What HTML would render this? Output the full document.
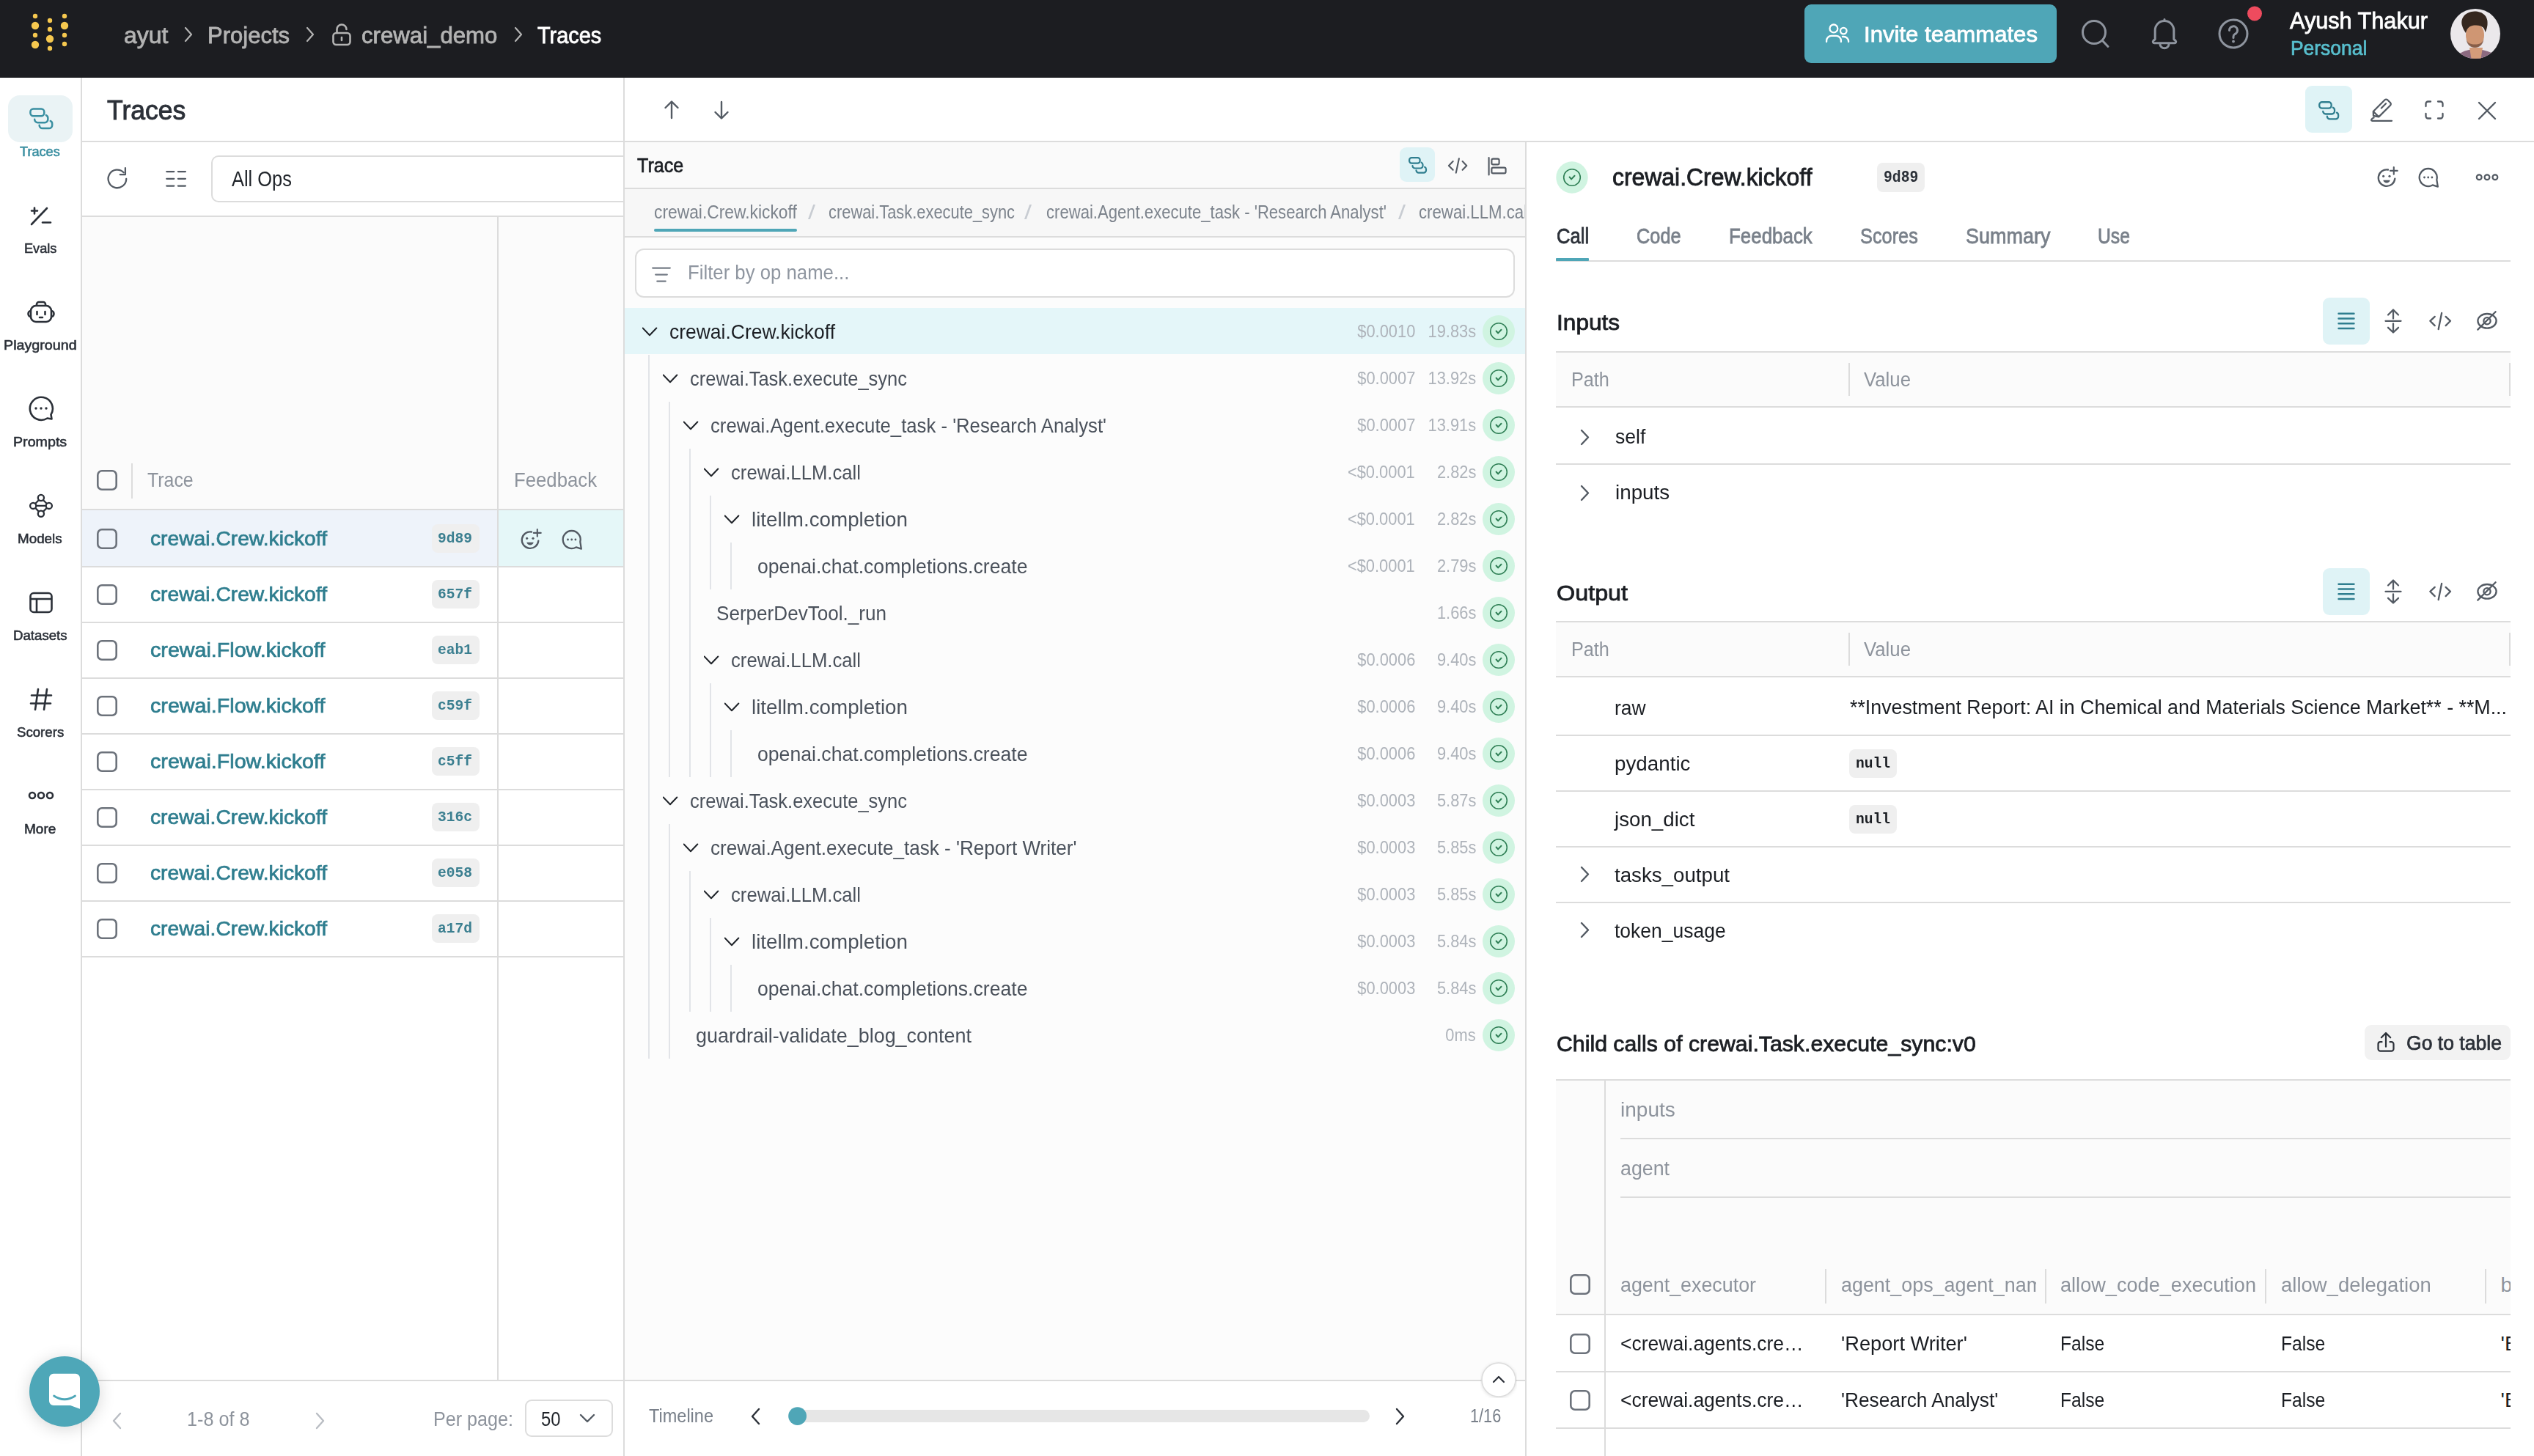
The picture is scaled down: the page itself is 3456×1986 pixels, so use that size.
<!DOCTYPE html>
<html><head><meta charset="utf-8"><title>Weave Traces</title>
<style>
html,body{margin:0;padding:0;width:3456px;height:1986px;overflow:hidden;background:#fff;}
.a{position:absolute;}
.t{white-space:pre;line-height:1;transform-origin:left;}
body{font-family:"Liberation Sans", sans-serif;}
</style></head><body>
<div class="a" style="left:0px;top:0px;width:3456px;height:106px;background:#1c1d21;"></div>
<svg class="a" style="left:0px;top:0px;" width="120" height="106" viewBox="0 0 120 106" fill="none"><circle cx="48" cy="22" r="3.2" fill="#f6c84f"/><circle cx="48" cy="35" r="5.2" fill="#f6c84f"/><circle cx="48" cy="48" r="3.2" fill="#f6c84f"/><circle cx="48" cy="61" r="5.2" fill="#f6c84f"/><circle cx="68" cy="28" r="3.2" fill="#f6c84f"/><circle cx="68" cy="40" r="3.2" fill="#f6c84f"/><circle cx="68" cy="53" r="5.2" fill="#f6c84f"/><circle cx="68" cy="66" r="3.2" fill="#f6c84f"/><circle cx="88" cy="22" r="3.2" fill="#f6c84f"/><circle cx="88" cy="35" r="5.2" fill="#f6c84f"/><circle cx="88" cy="48" r="3.2" fill="#f6c84f"/><circle cx="88" cy="60" r="3.2" fill="#f6c84f"/></svg>
<span class="a t" style="left:168.7px;top:32.8px;font-size:30.52px;font-weight:400;color:#b3b3b3;font-family:'Liberation Sans', sans-serif;transform:scaleX(1.0453);-webkit-text-stroke:0.79px #b3b3b3;">ayut</span>
<svg class="a" style="left:250px;top:35px;" width="14" height="24" viewBox="0 0 14 24" fill="none"><path d="M3 3 L11 12 L3 21" stroke="#b3b3b3" stroke-width="2.2" stroke-linecap="round" stroke-linejoin="round"/></svg>
<span class="a t" style="left:283.0px;top:32.8px;font-size:30.52px;font-weight:400;color:#b3b3b3;font-family:'Liberation Sans', sans-serif;transform:scaleX(1.0160);-webkit-text-stroke:0.79px #b3b3b3;">Projects</span>
<svg class="a" style="left:416px;top:35px;" width="14" height="24" viewBox="0 0 14 24" fill="none"><path d="M3 3 L11 12 L3 21" stroke="#b3b3b3" stroke-width="2.2" stroke-linecap="round" stroke-linejoin="round"/></svg>
<svg class="a" style="left:450px;top:30px;" width="32" height="34" viewBox="0 0 32 34" fill="none"><rect x="4.5" y="15" width="23" height="16" rx="4" stroke="#b3b3b3" stroke-width="2.6"/><path d="M9.5 15 V10 a6.5 6.5 0 0 1 13 0" stroke="#b3b3b3" stroke-width="2.6" stroke-linecap="round"/><path d="M16 21 v4" stroke="#b3b3b3" stroke-width="2.6" stroke-linecap="round"/></svg>
<span class="a t" style="left:492.6px;top:32.8px;font-size:30.52px;font-weight:400;color:#b3b3b3;font-family:'Liberation Sans', sans-serif;transform:scaleX(1.0215);-webkit-text-stroke:0.79px #b3b3b3;">crewai_demo</span>
<svg class="a" style="left:700px;top:35px;" width="14" height="24" viewBox="0 0 14 24" fill="none"><path d="M3 3 L11 12 L3 21" stroke="#b3b3b3" stroke-width="2.2" stroke-linecap="round" stroke-linejoin="round"/></svg>
<span class="a t" style="left:732.7px;top:32.8px;font-size:30.52px;font-weight:400;color:#ffffff;font-family:'Liberation Sans', sans-serif;transform:scaleX(0.9475);-webkit-text-stroke:0.79px #ffffff;">Traces</span>
<div class="a" style="left:2461px;top:6px;width:344px;height:80px;background:#4fa6b7;border-radius:9px;"></div>
<svg class="a" style="left:2486px;top:30px;" width="40" height="32" viewBox="0 0 40 32" fill="none"><circle cx="14.9" cy="8.9" r="5.4" stroke="#fff" stroke-width="2.3"/><path d="M5.1 27.1 V25.5 a6.6 6.6 0 0 1 6.6 -6.6 H18.3 a6.6 6.6 0 0 1 6.6 6.6 V27.1" stroke="#fff" stroke-width="2.3" stroke-linecap="round"/><circle cx="28.3" cy="12.1" r="4.3" stroke="#fff" stroke-width="2.3"/><path d="M26.9 20 H28.5 a6.6 6.6 0 0 1 6.6 6.6 V27.1" stroke="#fff" stroke-width="2.3" stroke-linecap="round"/></svg>
<span class="a t" style="left:2542.0px;top:32.4px;font-size:30.23px;font-weight:400;color:#ffffff;font-family:'Liberation Sans', sans-serif;transform:scaleX(1.0300);-webkit-text-stroke:0.79px #ffffff;">Invite teammates</span>
<svg class="a" style="left:2830px;top:18px;" width="52" height="52" viewBox="0 0 52 52" fill="none"><circle cx="26" cy="26" r="15.5" stroke="#8e949e" stroke-width="3"/><path d="M37.5 37.5 L45 45.5" stroke="#8e949e" stroke-width="3" stroke-linecap="round"/></svg>
<svg class="a" style="left:2930px;top:22px;" width="44" height="48" viewBox="0 0 44 48" fill="none"><path d="M22 4.5 V6.3 M9.2 31.5 V19.3 a12.8 12.8 0 0 1 25.6 0 V31.5 l2.3 2 a1.9 1.9 0 0 1 -1.3 3.3 H8.2 a1.9 1.9 0 0 1 -1.3 -3.3 z M16 38.3 a6 5.5 0 0 0 12 0" stroke="#8e949e" stroke-width="3" stroke-linejoin="round" stroke-linecap="round"/></svg>
<svg class="a" style="left:3020px;top:20px;" width="52" height="52" viewBox="0 0 52 52" fill="none"><circle cx="26" cy="26" r="19" stroke="#8e949e" stroke-width="3"/><path d="M20.5 21.5 a5.5 5.5 0 1 1 7.5 5 c-1.5 0.8 -2 1.8 -2 3.5 v1.5" stroke="#8e949e" stroke-width="3" stroke-linecap="round"/><circle cx="26" cy="36.5" r="1.9" fill="#8e949e"/></svg>
<svg class="a" style="left:3064px;top:8px;" width="22" height="22" viewBox="0 0 22 22" fill="none"><circle cx="11" cy="10.5" r="10" fill="#ee4b5e"/></svg>
<span class="a t" style="left:3123.0px;top:11.7px;font-size:31.98px;font-weight:400;color:#ffffff;font-family:'Liberation Sans', sans-serif;transform:scaleX(0.9588);-webkit-text-stroke:0.83px #ffffff;">Ayush Thakur</span>
<span class="a t" style="left:3123.7px;top:53.2px;font-size:26.89px;font-weight:400;color:#58bfce;font-family:'Liberation Sans', sans-serif;transform:scaleX(0.9832);-webkit-text-stroke:0.7px #58bfce;">Personal</span>
<svg class="a" style="left:3341px;top:11px;" width="70" height="70" viewBox="0 0 70 70" fill="none"><defs><clipPath id="av"><circle cx="35" cy="35" r="34"/></clipPath></defs>
<g clip-path="url(#av)"><rect width="70" height="70" fill="#ebe8eb"/>
<path d="M6 72 L12 63 C20 58 27 56 35 56 C43 56 50 58 57 61 L66 67 L68 72 Z" fill="#8c6a80"/>
<path d="M27 54 L45 54 L42 72 L30 72 Z" fill="#d49c7a"/>
<ellipse cx="34.5" cy="37" rx="12.5" ry="16.5" fill="#cf9673"/>
<path d="M22.5 42 C23.5 50 28 54 34.5 54 C41 54 45.5 50 46.5 42 C45 47 42 49.5 34.5 49.5 C27 49.5 24 47 22.5 42 Z" fill="#6a4636" opacity="0.7"/>
<path d="M17 24 C14 13 22 5 34 4.5 C45 4.5 53 11 51.5 23 C51 27 50 30 48.5 33 C47.5 27 45 24 36 23.5 C28 23.5 24 26 22 34 C20 31 18 28 17 24 Z" fill="#35271f"/>
</g></svg>
<div class="a" style="left:110px;top:106px;width:2px;height:1880px;background:#dcdcdc;"></div>
<div class="a" style="left:11px;top:130px;width:88px;height:64px;background:#eaf3f5;border-radius:16px;"></div>
<svg class="a" style="left:38px;top:145px;" width="43" height="39" viewBox="0 0 43 39" fill="none"><g transform="translate(2 2) scale(1.3)"><rect x="1.1" y="1.1" width="14.5" height="7.5" rx="3.1" stroke="#3a8fa1" stroke-width="1.923076923076923"/><path d="M5.5 12.2 a3.3 3.3 0 0 0 3.3 3.3 H16.2 a3.3 3.3 0 0 0 3.3 -3.3 V10.8 a3.3 3.3 0 0 0 -1.9 -3.1" stroke="#3a8fa1" stroke-width="1.923076923076923" stroke-linecap="round"/><path d="M10.5 18.3 a3.3 3.3 0 0 0 3.3 3.3 H20.7 a3.3 3.3 0 0 0 3.3 -3.3 V16.9 a3.3 3.3 0 0 0 -1.9 -3.1" stroke="#3a8fa1" stroke-width="1.923076923076923" stroke-linecap="round"/></g></svg>
<span class="a t" style="left:27.4px;top:197.7px;font-size:18.6px;font-weight:400;color:#3a8fa1;font-family:'Liberation Sans', sans-serif;transform:scaleX(0.9761);-webkit-text-stroke:0.55px #3a8fa1;">Traces</span>
<svg class="a" style="left:38px;top:280px;" width="36" height="30" viewBox="0 0 36 30" fill="none"><path d="M5 7.5 h8 M9 3.5 v8 M26 4 L5 26 M20 23.5 h11" stroke="#2b3038" stroke-width="2.6" stroke-linecap="round"/></svg>
<span class="a t" style="left:32.6px;top:330.0px;font-size:18.6px;font-weight:400;color:#2b3038;font-family:'Liberation Sans', sans-serif;transform:scaleX(0.9765);-webkit-text-stroke:0.55px #2b3038;">Evals</span>
<svg class="a" style="left:36px;top:408px;" width="40" height="36" viewBox="0 0 40 36" fill="none"><rect x="6" y="9" width="28" height="22" rx="7" stroke="#2b3038" stroke-width="2.6"/><path d="M14 9 v-2 a3 3 0 0 1 3-3 h6 a3 3 0 0 1 3 3 v2" stroke="#2b3038" stroke-width="2.6"/><path d="M6 16 a3.5 4 0 0 0 0 8 M34 16 a3.5 4 0 0 1 0 8" stroke="#2b3038" stroke-width="2.6"/><path d="M14.5 17 v4 M25.5 17 v4 M18 25 h4" stroke="#2b3038" stroke-width="2.6" stroke-linecap="round"/></svg>
<span class="a t" style="left:4.7px;top:461.9px;font-size:18.6px;font-weight:400;color:#2b3038;font-family:'Liberation Sans', sans-serif;transform:scaleX(1.0598);-webkit-text-stroke:0.55px #2b3038;">Playground</span>
<svg class="a" style="left:37px;top:538px;" width="38" height="38" viewBox="0 0 38 38" fill="none"><path d="M33.5 33.5 l-1-6 a15.5 15.5 0 1 0 -5 5 z" stroke="#2b3038" stroke-width="2.6" stroke-linejoin="round"/><circle cx="12" cy="19" r="1.7" fill="#2b3038"/><circle cx="19" cy="19" r="1.7" fill="#2b3038"/><circle cx="26" cy="19" r="1.7" fill="#2b3038"/></svg>
<span class="a t" style="left:17.8px;top:593.9px;font-size:18.6px;font-weight:400;color:#2b3038;font-family:'Liberation Sans', sans-serif;transform:scaleX(1.0573);-webkit-text-stroke:0.55px #2b3038;">Prompts</span>
<svg class="a" style="left:37px;top:670px;" width="38" height="38" viewBox="0 0 38 38" fill="none"><circle cx="18.9" cy="9" r="4.1" stroke="#2b3038" stroke-width="2.3"/><circle cx="18.9" cy="30.8" r="4.1" stroke="#2b3038" stroke-width="2.3"/><circle cx="8.2" cy="19.9" r="4.1" stroke="#2b3038" stroke-width="2.3"/><circle cx="29.8" cy="19.9" r="4.1" stroke="#2b3038" stroke-width="2.3"/><path d="M16 12 L11.1 17 M21.8 12 L26.9 17 M11.1 22.8 L16 27.9 M26.9 22.8 L21.8 27.9 M12.3 19.9 H25.7" stroke="#2b3038" stroke-width="2.3"/></svg>
<span class="a t" style="left:24.3px;top:725.9px;font-size:18.6px;font-weight:400;color:#2b3038;font-family:'Liberation Sans', sans-serif;transform:scaleX(1.0125);-webkit-text-stroke:0.55px #2b3038;">Models</span>
<svg class="a" style="left:38px;top:804px;" width="36" height="36" viewBox="0 0 36 36" fill="none"><rect x="3.5" y="5" width="29" height="26" rx="4.5" stroke="#2b3038" stroke-width="2.6"/><path d="M3.5 13 h29 M12 13 v18" stroke="#2b3038" stroke-width="2.6"/></svg>
<span class="a t" style="left:17.9px;top:857.9px;font-size:18.6px;font-weight:400;color:#2b3038;font-family:'Liberation Sans', sans-serif;transform:scaleX(1.0029);-webkit-text-stroke:0.55px #2b3038;">Datasets</span>
<svg class="a" style="left:38px;top:936px;" width="36" height="36" viewBox="0 0 36 36" fill="none"><path d="M14 4 L10 32 M26 4 L22 32 M5 12.5 h27 M4 23.5 h27" stroke="#2b3038" stroke-width="2.6" stroke-linecap="round"/></svg>
<span class="a t" style="left:22.6px;top:989.9px;font-size:18.6px;font-weight:400;color:#2b3038;font-family:'Liberation Sans', sans-serif;transform:scaleX(1.0021);-webkit-text-stroke:0.55px #2b3038;">Scorers</span>
<svg class="a" style="left:36px;top:1076px;" width="40" height="18" viewBox="0 0 40 18" fill="none"><circle cx="8" cy="9" r="4" stroke="#2b3038" stroke-width="2.6"/><circle cx="20" cy="9" r="4" stroke="#2b3038" stroke-width="2.6"/><circle cx="32" cy="9" r="4" stroke="#2b3038" stroke-width="2.6"/></svg>
<span class="a t" style="left:33.2px;top:1121.9px;font-size:18.6px;font-weight:400;color:#2b3038;font-family:'Liberation Sans', sans-serif;transform:scaleX(1.0242);-webkit-text-stroke:0.55px #2b3038;">More</span>
<div class="a" style="left:850px;top:106px;width:2px;height:1880px;background:#dcdcdc;"></div>
<span class="a t" style="left:145.6px;top:132.0px;font-size:37.06px;font-weight:400;color:#2b3038;font-family:'Liberation Sans', sans-serif;transform:scaleX(0.9601);-webkit-text-stroke:0.96px #2b3038;">Traces</span>
<div class="a" style="left:112px;top:192px;width:739px;height:2px;background:#dcdcdc;"></div>
<svg class="a" style="left:144px;top:228px;" width="32" height="32" viewBox="0 0 32 32" fill="none"><path d="M28.2 15.9 A12.3 12.3 0 1 1 24.6 7.2" stroke="#535a63" stroke-width="2.3" stroke-linecap="round"/><path d="M26.9 1.2 V10.2 H19.8" stroke="#535a63" stroke-width="2.3" stroke-linecap="round" stroke-linejoin="round"/></svg>
<svg class="a" style="left:224px;top:228px;" width="32" height="32" viewBox="0 0 32 32" fill="none"><path d="M3.3 6.1 H13.3 M3.3 15.8 H13.3 M3.3 25.6 H13.3 M18.9 6.1 H28.9 M18.9 15.8 H28.9 M18.9 25.6 H28.9" stroke="#535a63" stroke-width="2.3" stroke-linecap="round"/></svg>
<div class="a" style="left:288px;top:212px;width:562px;height:64px;overflow:hidden">
<div class="a" style="left:0px;top:0px;width:600px;height:64px;background:#fff;box-shadow:inset 0 0 0 2px #dcdcdc;border-radius:10px;"></div>
</div>
<span class="a t" style="left:316.0px;top:229.4px;font-size:29.8px;font-weight:400;color:#1f2329;font-family:'Liberation Sans', sans-serif;transform:scaleX(0.8537);">All Ops</span>
<div class="a" style="left:112px;top:294px;width:739px;height:2px;background:#dcdcdc;"></div>
<div class="a" style="left:112px;top:296px;width:738px;height:398px;background:#fbfbfb;"></div>
<div class="a" style="left:678px;top:296px;width:2px;height:1586px;background:#dcdcdc;"></div>
<div class="a" style="left:112px;top:694px;width:739px;height:2px;background:#dcdcdc;"></div>
<div class="a" style="left:132px;top:641px;width:28px;height:28px;background:transparent;box-shadow:inset 0 0 0 2.6px #6c727b;border-radius:7px;"></div>
<div class="a" style="left:179px;top:632px;width:2px;height:48px;background:#dcdcdc;"></div>
<span class="a t" style="left:200.6px;top:641.2px;font-size:28.05px;font-weight:400;color:#8d939c;font-family:'Liberation Sans', sans-serif;transform:scaleX(0.8874);">Trace</span>
<span class="a t" style="left:701.0px;top:641.2px;font-size:28.05px;font-weight:400;color:#8d939c;font-family:'Liberation Sans', sans-serif;transform:scaleX(0.9174);">Feedback</span>
<div class="a" style="left:112px;top:696px;width:566px;height:76px;background:#eef3fa;"></div>
<div class="a" style="left:680px;top:696px;width:170px;height:76px;background:#e5f7f8;"></div>
<div class="a" style="left:112px;top:772px;width:738px;height:2px;background:#dcdcdc;"></div>
<div class="a" style="left:132px;top:721px;width:28px;height:28px;background:transparent;box-shadow:inset 0 0 0 2.6px #6c727b;border-radius:7px;"></div>
<span class="a t" style="left:205.0px;top:720.6px;font-size:27.62px;font-weight:400;color:#2f7e8f;font-family:'Liberation Sans', sans-serif;transform:scaleX(1.0221);-webkit-text-stroke:0.72px #2f7e8f;">crewai.Crew.kickoff</span>
<div class="a" style="left:589px;top:715px;width:65px;height:39px;background:#efefef;border-radius:8px;"></div>
<span class="a t" style="left:597.3px;top:725.2px;font-size:20.64px;font-weight:700;color:#3b7f90;font-family:'Liberation Mono', monospace;transform:scaleX(0.9492);">9d89</span>
<div class="a" style="left:112px;top:848px;width:738px;height:2px;background:#dcdcdc;"></div>
<div class="a" style="left:132px;top:797px;width:28px;height:28px;background:transparent;box-shadow:inset 0 0 0 2.6px #6c727b;border-radius:7px;"></div>
<span class="a t" style="left:205.0px;top:796.6px;font-size:27.62px;font-weight:400;color:#2f7e8f;font-family:'Liberation Sans', sans-serif;transform:scaleX(1.0221);-webkit-text-stroke:0.72px #2f7e8f;">crewai.Crew.kickoff</span>
<div class="a" style="left:589px;top:791px;width:65px;height:39px;background:#efefef;border-radius:8px;"></div>
<span class="a t" style="left:597.3px;top:801.2px;font-size:20.64px;font-weight:700;color:#3b7f90;font-family:'Liberation Mono', monospace;transform:scaleX(0.9492);">657f</span>
<div class="a" style="left:112px;top:924px;width:738px;height:2px;background:#dcdcdc;"></div>
<div class="a" style="left:132px;top:873px;width:28px;height:28px;background:transparent;box-shadow:inset 0 0 0 2.6px #6c727b;border-radius:7px;"></div>
<span class="a t" style="left:205.0px;top:872.6px;font-size:27.62px;font-weight:400;color:#2f7e8f;font-family:'Liberation Sans', sans-serif;transform:scaleX(1.0381);-webkit-text-stroke:0.72px #2f7e8f;">crewai.Flow.kickoff</span>
<div class="a" style="left:589px;top:867px;width:65px;height:39px;background:#efefef;border-radius:8px;"></div>
<span class="a t" style="left:597.3px;top:877.2px;font-size:20.64px;font-weight:700;color:#3b7f90;font-family:'Liberation Mono', monospace;transform:scaleX(0.9492);">eab1</span>
<div class="a" style="left:112px;top:1000px;width:738px;height:2px;background:#dcdcdc;"></div>
<div class="a" style="left:132px;top:949px;width:28px;height:28px;background:transparent;box-shadow:inset 0 0 0 2.6px #6c727b;border-radius:7px;"></div>
<span class="a t" style="left:205.0px;top:948.6px;font-size:27.62px;font-weight:400;color:#2f7e8f;font-family:'Liberation Sans', sans-serif;transform:scaleX(1.0381);-webkit-text-stroke:0.72px #2f7e8f;">crewai.Flow.kickoff</span>
<div class="a" style="left:589px;top:943px;width:65px;height:39px;background:#efefef;border-radius:8px;"></div>
<span class="a t" style="left:597.3px;top:953.2px;font-size:20.64px;font-weight:700;color:#3b7f90;font-family:'Liberation Mono', monospace;transform:scaleX(0.9492);">c59f</span>
<div class="a" style="left:112px;top:1076px;width:738px;height:2px;background:#dcdcdc;"></div>
<div class="a" style="left:132px;top:1025px;width:28px;height:28px;background:transparent;box-shadow:inset 0 0 0 2.6px #6c727b;border-radius:7px;"></div>
<span class="a t" style="left:205.0px;top:1024.6px;font-size:27.62px;font-weight:400;color:#2f7e8f;font-family:'Liberation Sans', sans-serif;transform:scaleX(1.0381);-webkit-text-stroke:0.72px #2f7e8f;">crewai.Flow.kickoff</span>
<div class="a" style="left:589px;top:1019px;width:65px;height:39px;background:#efefef;border-radius:8px;"></div>
<span class="a t" style="left:597.3px;top:1029.2px;font-size:20.64px;font-weight:700;color:#3b7f90;font-family:'Liberation Mono', monospace;transform:scaleX(0.9492);">c5ff</span>
<div class="a" style="left:112px;top:1152px;width:738px;height:2px;background:#dcdcdc;"></div>
<div class="a" style="left:132px;top:1101px;width:28px;height:28px;background:transparent;box-shadow:inset 0 0 0 2.6px #6c727b;border-radius:7px;"></div>
<span class="a t" style="left:205.0px;top:1100.6px;font-size:27.62px;font-weight:400;color:#2f7e8f;font-family:'Liberation Sans', sans-serif;transform:scaleX(1.0221);-webkit-text-stroke:0.72px #2f7e8f;">crewai.Crew.kickoff</span>
<div class="a" style="left:589px;top:1095px;width:65px;height:39px;background:#efefef;border-radius:8px;"></div>
<span class="a t" style="left:597.3px;top:1105.2px;font-size:20.64px;font-weight:700;color:#3b7f90;font-family:'Liberation Mono', monospace;transform:scaleX(0.9492);">316c</span>
<div class="a" style="left:112px;top:1228px;width:738px;height:2px;background:#dcdcdc;"></div>
<div class="a" style="left:132px;top:1177px;width:28px;height:28px;background:transparent;box-shadow:inset 0 0 0 2.6px #6c727b;border-radius:7px;"></div>
<span class="a t" style="left:205.0px;top:1176.6px;font-size:27.62px;font-weight:400;color:#2f7e8f;font-family:'Liberation Sans', sans-serif;transform:scaleX(1.0221);-webkit-text-stroke:0.72px #2f7e8f;">crewai.Crew.kickoff</span>
<div class="a" style="left:589px;top:1171px;width:65px;height:39px;background:#efefef;border-radius:8px;"></div>
<span class="a t" style="left:597.3px;top:1181.2px;font-size:20.64px;font-weight:700;color:#3b7f90;font-family:'Liberation Mono', monospace;transform:scaleX(0.9492);">e058</span>
<div class="a" style="left:112px;top:1304px;width:738px;height:2px;background:#dcdcdc;"></div>
<div class="a" style="left:132px;top:1253px;width:28px;height:28px;background:transparent;box-shadow:inset 0 0 0 2.6px #6c727b;border-radius:7px;"></div>
<span class="a t" style="left:205.0px;top:1252.6px;font-size:27.62px;font-weight:400;color:#2f7e8f;font-family:'Liberation Sans', sans-serif;transform:scaleX(1.0221);-webkit-text-stroke:0.72px #2f7e8f;">crewai.Crew.kickoff</span>
<div class="a" style="left:589px;top:1247px;width:65px;height:39px;background:#efefef;border-radius:8px;"></div>
<span class="a t" style="left:597.3px;top:1257.2px;font-size:20.64px;font-weight:700;color:#3b7f90;font-family:'Liberation Mono', monospace;transform:scaleX(0.9492);">a17d</span>
<svg class="a" style="left:708px;top:720px;" width="34" height="32" viewBox="0 0 34 32" fill="none"><path d="M26.3 17.6 A11.3 11.3 0 1 1 17 5.5" stroke="#535a63" stroke-width="2.3" stroke-linecap="round"/><circle cx="10.6" cy="14.3" r="1.6" fill="#535a63"/><circle cx="19" cy="14.3" r="1.6" fill="#535a63"/><path d="M10.3 19.8 H19.7 C19 22.3 17.2 23.6 15 23.6 C12.8 23.6 11 22.3 10.3 19.8 Z" fill="#535a63"/><path d="M24.8 2 V11.8 M19.9 6.9 H29.7" stroke="#535a63" stroke-width="2.1" stroke-linecap="round"/></svg>
<svg class="a" style="left:765px;top:720px;" width="32" height="32" viewBox="0 0 32 32" fill="none"><path d="M20.7 26.4 A12 12 0 1 1 26.3 19.1 L27.8 28.6 Z" stroke="#535a63" stroke-width="2.3" stroke-linejoin="round"/><circle cx="9.5" cy="16" r="1.4" fill="#535a63"/><circle cx="14.7" cy="16" r="1.4" fill="#535a63"/><circle cx="19.9" cy="16" r="1.4" fill="#535a63"/></svg>
<div class="a" style="left:112px;top:1882px;width:738px;height:2px;background:#dcdcdc;"></div>
<svg class="a" style="left:150px;top:1924px;" width="20" height="28" viewBox="0 0 20 28" fill="none"><path d="M14 4 L5 14 L14 24" stroke="#b9bdc3" stroke-width="2.4" stroke-linecap="round" stroke-linejoin="round"/></svg>
<span class="a t" style="left:254.5px;top:1922.2px;font-size:27.62px;font-weight:400;color:#8d939c;font-family:'Liberation Sans', sans-serif;transform:scaleX(0.9131);">1-8 of 8</span>
<svg class="a" style="left:426px;top:1924px;" width="20" height="28" viewBox="0 0 20 28" fill="none"><path d="M6 4 L15 14 L6 24" stroke="#b9bdc3" stroke-width="2.4" stroke-linecap="round" stroke-linejoin="round"/></svg>
<span class="a t" style="left:591.0px;top:1922.2px;font-size:27.62px;font-weight:400;color:#8d939c;font-family:'Liberation Sans', sans-serif;transform:scaleX(0.9103);">Per page:</span>
<div class="a" style="left:716px;top:1909px;width:120px;height:51px;background:#fff;box-shadow:inset 0 0 0 2px #dcdcdc;border-radius:9px;"></div>
<span class="a t" style="left:737.5px;top:1922.2px;font-size:27.62px;font-weight:400;color:#1f2329;font-family:'Liberation Sans', sans-serif;transform:scaleX(0.8627);">50</span>
<svg class="a" style="left:788px;top:1924px;" width="28" height="20" viewBox="0 0 28 20" fill="none"><path d="M4 6 L13 15 L22 6" stroke="#535a63" stroke-width="2.4" stroke-linecap="round" stroke-linejoin="round"/></svg>
<svg class="a" style="left:900px;top:134px;" width="32" height="32" viewBox="0 0 32 32" fill="none"><path d="M16 27 V5.5 M7.5 13 L16 4.5 L24.5 13" stroke="#535a63" stroke-width="2.4" stroke-linecap="round" stroke-linejoin="round"/></svg>
<svg class="a" style="left:968px;top:134px;" width="32" height="32" viewBox="0 0 32 32" fill="none"><path d="M16 5 V26.5 M7.5 19 L16 27.5 L24.5 19" stroke="#535a63" stroke-width="2.4" stroke-linecap="round" stroke-linejoin="round"/></svg>
<div class="a" style="left:852px;top:192px;width:2604px;height:2px;background:#dcdcdc;"></div>
<div class="a" style="left:852px;top:194px;width:1228px;height:62px;background:#fafafa;"></div>
<span class="a t" style="left:869.4px;top:211.8px;font-size:27.62px;font-weight:400;color:#1b1e23;font-family:'Liberation Sans', sans-serif;transform:scaleX(0.9085);-webkit-text-stroke:0.72px #1b1e23;">Trace</span>
<div class="a" style="left:1909px;top:201px;width:48px;height:47px;background:#dff3f6;border-radius:9px;"></div>
<svg class="a" style="left:1919px;top:212.3px;" width="34" height="31" viewBox="0 0 34 31" fill="none"><g transform="translate(2 2) scale(1.0)"><rect x="1.1" y="1.1" width="14.5" height="7.5" rx="3.1" stroke="#2f7e8f" stroke-width="2.2"/><path d="M5.5 12.2 a3.3 3.3 0 0 0 3.3 3.3 H16.2 a3.3 3.3 0 0 0 3.3 -3.3 V10.8 a3.3 3.3 0 0 0 -1.9 -3.1" stroke="#2f7e8f" stroke-width="2.2" stroke-linecap="round"/><path d="M10.5 18.3 a3.3 3.3 0 0 0 3.3 3.3 H20.7 a3.3 3.3 0 0 0 3.3 -3.3 V16.9 a3.3 3.3 0 0 0 -1.9 -3.1" stroke="#2f7e8f" stroke-width="2.2" stroke-linecap="round"/></g></svg>
<svg class="a" style="left:1970px;top:210px;" width="36" height="32" viewBox="0 0 36 32" fill="none"><path d="M11.7 10.1 L5.9 15.9 L11.7 21.8 M24.6 10.1 L30.3 15.9 L24.6 21.8 M19.9 6.3 L15.8 25.6" stroke="#535a63" stroke-width="2.1" stroke-linecap="round" stroke-linejoin="round"/></svg>
<svg class="a" style="left:2026px;top:210px;" width="34" height="32" viewBox="0 0 34 32" fill="none"><path d="M4.6 5 V28.4" stroke="#535a63" stroke-width="2.1" stroke-linecap="round"/><rect x="8.4" y="6.6" width="10.2" height="7.8" rx="2" stroke="#535a63" stroke-width="2.1"/><rect x="8.4" y="18.6" width="19.2" height="7.8" rx="2" stroke="#535a63" stroke-width="2.1"/></svg>
<div class="a" style="left:852px;top:256px;width:1228px;height:2px;background:#dcdcdc;"></div>
<div class="a" style="left:852px;top:258px;width:1228px;height:64px;background:#f7f7f7;"></div>
<span class="a t" style="left:892.0px;top:276.5px;font-size:25.44px;font-weight:400;color:#7c838c;font-family:'Liberation Sans', sans-serif;transform:scaleX(0.8967);">crewai.Crew.kickoff</span>
<div class="a" style="left:892px;top:312px;width:195px;height:4px;background:#4fa6b7;border-radius:2px;"></div>
<span class="a t" style="left:1102.0px;top:275.6px;font-size:27.62px;font-weight:400;color:#c8ccd2;font-family:'Liberation Sans', sans-serif;transform:scaleX(1.3035);">/</span>
<span class="a t" style="left:1130.0px;top:276.5px;font-size:25.44px;font-weight:400;color:#7c838c;font-family:'Liberation Sans', sans-serif;transform:scaleX(0.8596);">crewai.Task.execute_sync</span>
<span class="a t" style="left:1397.0px;top:275.6px;font-size:27.62px;font-weight:400;color:#c8ccd2;font-family:'Liberation Sans', sans-serif;transform:scaleX(1.3035);">/</span>
<span class="a t" style="left:1426.7px;top:276.5px;font-size:25.44px;font-weight:400;color:#7c838c;font-family:'Liberation Sans', sans-serif;transform:scaleX(0.8685);">crewai.Agent.execute_task - 'Research Analyst'</span>
<span class="a t" style="left:1907.0px;top:275.6px;font-size:27.62px;font-weight:400;color:#c8ccd2;font-family:'Liberation Sans', sans-serif;transform:scaleX(1.3035);">/</span>
<div class="a" style="left:1935px;top:258px;width:145px;height:64px;overflow:hidden">
<span class="a t" style="left:0.0px;top:18.5px;font-size:25.44px;font-weight:400;color:#7c838c;font-family:'Liberation Sans', sans-serif;transform:scaleX(0.8728);">crewai.LLM.call</span>
</div>
<div class="a" style="left:852px;top:322px;width:1228px;height:2px;background:#dcdcdc;"></div>
<div class="a" style="left:852px;top:324px;width:1228px;height:1558px;background:#fcfcfc;"></div>
<div class="a" style="left:866px;top:339px;width:1200px;height:67px;background:#fff;box-shadow:inset 0 0 0 2px #dcdcdc;border-radius:12px;"></div>
<svg class="a" style="left:886px;top:360px;" width="32" height="28" viewBox="0 0 32 28" fill="none"><path d="M4.2 5.6 H27.8 M8.2 14.6 H23.8 M10.3 23.6 H21.7" stroke="#767d87" stroke-width="2.3" stroke-linecap="round"/></svg>
<span class="a t" style="left:937.6px;top:358.9px;font-size:26.89px;font-weight:400;color:#8f96a0;font-family:'Liberation Sans', sans-serif;transform:scaleX(0.9581);">Filter by op name...</span>
<div class="a" style="left:852px;top:420px;width:1228px;height:63px;background:#e4f6f9;"></div>
<div class="a" style="left:884px;top:484px;width:2px;height:960px;background:#e2e4e8;"></div>
<div class="a" style="left:912px;top:548px;width:2px;height:512px;background:#e2e4e8;"></div>
<div class="a" style="left:940px;top:612px;width:2px;height:448px;background:#e2e4e8;"></div>
<div class="a" style="left:968px;top:676px;width:2px;height:128px;background:#e2e4e8;"></div>
<div class="a" style="left:996px;top:740px;width:2px;height:64px;background:#e2e4e8;"></div>
<div class="a" style="left:968px;top:932px;width:2px;height:128px;background:#e2e4e8;"></div>
<div class="a" style="left:996px;top:996px;width:2px;height:64px;background:#e2e4e8;"></div>
<div class="a" style="left:912px;top:1124px;width:2px;height:320px;background:#e2e4e8;"></div>
<div class="a" style="left:940px;top:1188px;width:2px;height:192px;background:#e2e4e8;"></div>
<div class="a" style="left:968px;top:1252px;width:2px;height:128px;background:#e2e4e8;"></div>
<div class="a" style="left:996px;top:1316px;width:2px;height:64px;background:#e2e4e8;"></div>
<svg class="a" style="left:875.7px;top:442px;" width="22" height="20" viewBox="0 0 22 20" fill="none"><path d="M0.6 5.5 L10 15.3 L19.3 5.5" stroke="#1f2329" stroke-width="2" stroke-linecap="round" stroke-linejoin="round"/></svg>
<span class="a t" style="left:912.7px;top:439.7px;font-size:26.89px;font-weight:400;color:#1b1e23;font-family:'Liberation Sans', sans-serif;transform:scaleX(0.9847);">crewai.Crew.kickoff</span>
<span class="a t" style="right:1526.0px;transform-origin:right;top:439.6px;font-size:24.71px;font-weight:400;color:#aeb3ba;font-family:'Liberation Sans', sans-serif;transform:scaleX(0.8850);">$0.0010</span>
<span class="a t" style="right:1443.0px;transform-origin:right;top:439.6px;font-size:24.71px;font-weight:400;color:#aeb3ba;font-family:'Liberation Sans', sans-serif;transform:scaleX(0.8850);">19.83s</span>
<svg class="a" style="left:2022px;top:430px;" width="44" height="44" viewBox="0 0 44 44" fill="none"><circle cx="22" cy="22" r="22" fill="#d0f4e1"/><circle cx="22" cy="22" r="11.3" stroke="#2f7f55" stroke-width="1.6"/><path d="M18.6 21.5 L21.1 24.4 L25.5 19.8" stroke="#2f7f55" stroke-width="2" stroke-linecap="round" stroke-linejoin="round"/></svg>
<svg class="a" style="left:903.7px;top:506px;" width="22" height="20" viewBox="0 0 22 20" fill="none"><path d="M0.6 5.5 L10 15.3 L19.3 5.5" stroke="#1f2329" stroke-width="2" stroke-linecap="round" stroke-linejoin="round"/></svg>
<span class="a t" style="left:940.7px;top:503.7px;font-size:26.89px;font-weight:400;color:#4a515b;font-family:'Liberation Sans', sans-serif;transform:scaleX(0.9481);">crewai.Task.execute_sync</span>
<span class="a t" style="right:1526.0px;transform-origin:right;top:503.6px;font-size:24.71px;font-weight:400;color:#aeb3ba;font-family:'Liberation Sans', sans-serif;transform:scaleX(0.8850);">$0.0007</span>
<span class="a t" style="right:1443.0px;transform-origin:right;top:503.6px;font-size:24.71px;font-weight:400;color:#aeb3ba;font-family:'Liberation Sans', sans-serif;transform:scaleX(0.8850);">13.92s</span>
<svg class="a" style="left:2022px;top:494px;" width="44" height="44" viewBox="0 0 44 44" fill="none"><circle cx="22" cy="22" r="22" fill="#d0f4e1"/><circle cx="22" cy="22" r="11.3" stroke="#2f7f55" stroke-width="1.6"/><path d="M18.6 21.5 L21.1 24.4 L25.5 19.8" stroke="#2f7f55" stroke-width="2" stroke-linecap="round" stroke-linejoin="round"/></svg>
<svg class="a" style="left:931.7px;top:570px;" width="22" height="20" viewBox="0 0 22 20" fill="none"><path d="M0.6 5.5 L10 15.3 L19.3 5.5" stroke="#1f2329" stroke-width="2" stroke-linecap="round" stroke-linejoin="round"/></svg>
<span class="a t" style="left:968.7px;top:567.7px;font-size:26.89px;font-weight:400;color:#4a515b;font-family:'Liberation Sans', sans-serif;transform:scaleX(0.9567);">crewai.Agent.execute_task - 'Research Analyst'</span>
<span class="a t" style="right:1526.0px;transform-origin:right;top:567.6px;font-size:24.71px;font-weight:400;color:#aeb3ba;font-family:'Liberation Sans', sans-serif;transform:scaleX(0.8850);">$0.0007</span>
<span class="a t" style="right:1443.0px;transform-origin:right;top:567.6px;font-size:24.71px;font-weight:400;color:#aeb3ba;font-family:'Liberation Sans', sans-serif;transform:scaleX(0.8850);">13.91s</span>
<svg class="a" style="left:2022px;top:558px;" width="44" height="44" viewBox="0 0 44 44" fill="none"><circle cx="22" cy="22" r="22" fill="#d0f4e1"/><circle cx="22" cy="22" r="11.3" stroke="#2f7f55" stroke-width="1.6"/><path d="M18.6 21.5 L21.1 24.4 L25.5 19.8" stroke="#2f7f55" stroke-width="2" stroke-linecap="round" stroke-linejoin="round"/></svg>
<svg class="a" style="left:959.7px;top:634px;" width="22" height="20" viewBox="0 0 22 20" fill="none"><path d="M0.6 5.5 L10 15.3 L19.3 5.5" stroke="#1f2329" stroke-width="2" stroke-linecap="round" stroke-linejoin="round"/></svg>
<span class="a t" style="left:996.7px;top:631.7px;font-size:26.89px;font-weight:400;color:#4a515b;font-family:'Liberation Sans', sans-serif;transform:scaleX(0.9557);">crewai.LLM.call</span>
<span class="a t" style="right:1526.0px;transform-origin:right;top:631.6px;font-size:24.71px;font-weight:400;color:#aeb3ba;font-family:'Liberation Sans', sans-serif;transform:scaleX(0.8850);">&lt;$0.0001</span>
<span class="a t" style="right:1443.0px;transform-origin:right;top:631.6px;font-size:24.71px;font-weight:400;color:#aeb3ba;font-family:'Liberation Sans', sans-serif;transform:scaleX(0.8850);">2.82s</span>
<svg class="a" style="left:2022px;top:622px;" width="44" height="44" viewBox="0 0 44 44" fill="none"><circle cx="22" cy="22" r="22" fill="#d0f4e1"/><circle cx="22" cy="22" r="11.3" stroke="#2f7f55" stroke-width="1.6"/><path d="M18.6 21.5 L21.1 24.4 L25.5 19.8" stroke="#2f7f55" stroke-width="2" stroke-linecap="round" stroke-linejoin="round"/></svg>
<svg class="a" style="left:987.7px;top:698px;" width="22" height="20" viewBox="0 0 22 20" fill="none"><path d="M0.6 5.5 L10 15.3 L19.3 5.5" stroke="#1f2329" stroke-width="2" stroke-linecap="round" stroke-linejoin="round"/></svg>
<span class="a t" style="left:1024.7px;top:695.7px;font-size:26.89px;font-weight:400;color:#4a515b;font-family:'Liberation Sans', sans-serif;transform:scaleX(1.0334);">litellm.completion</span>
<span class="a t" style="right:1526.0px;transform-origin:right;top:695.6px;font-size:24.71px;font-weight:400;color:#aeb3ba;font-family:'Liberation Sans', sans-serif;transform:scaleX(0.8850);">&lt;$0.0001</span>
<span class="a t" style="right:1443.0px;transform-origin:right;top:695.6px;font-size:24.71px;font-weight:400;color:#aeb3ba;font-family:'Liberation Sans', sans-serif;transform:scaleX(0.8850);">2.82s</span>
<svg class="a" style="left:2022px;top:686px;" width="44" height="44" viewBox="0 0 44 44" fill="none"><circle cx="22" cy="22" r="22" fill="#d0f4e1"/><circle cx="22" cy="22" r="11.3" stroke="#2f7f55" stroke-width="1.6"/><path d="M18.6 21.5 L21.1 24.4 L25.5 19.8" stroke="#2f7f55" stroke-width="2" stroke-linecap="round" stroke-linejoin="round"/></svg>
<span class="a t" style="left:1032.7px;top:759.7px;font-size:26.89px;font-weight:400;color:#4a515b;font-family:'Liberation Sans', sans-serif;transform:scaleX(0.9906);">openai.chat.completions.create</span>
<span class="a t" style="right:1526.0px;transform-origin:right;top:759.6px;font-size:24.71px;font-weight:400;color:#aeb3ba;font-family:'Liberation Sans', sans-serif;transform:scaleX(0.8850);">&lt;$0.0001</span>
<span class="a t" style="right:1443.0px;transform-origin:right;top:759.6px;font-size:24.71px;font-weight:400;color:#aeb3ba;font-family:'Liberation Sans', sans-serif;transform:scaleX(0.8850);">2.79s</span>
<svg class="a" style="left:2022px;top:750px;" width="44" height="44" viewBox="0 0 44 44" fill="none"><circle cx="22" cy="22" r="22" fill="#d0f4e1"/><circle cx="22" cy="22" r="11.3" stroke="#2f7f55" stroke-width="1.6"/><path d="M18.6 21.5 L21.1 24.4 L25.5 19.8" stroke="#2f7f55" stroke-width="2" stroke-linecap="round" stroke-linejoin="round"/></svg>
<span class="a t" style="left:976.7px;top:823.7px;font-size:26.89px;font-weight:400;color:#4a515b;font-family:'Liberation Sans', sans-serif;transform:scaleX(0.9706);">SerperDevTool._run</span>
<span class="a t" style="right:1443.0px;transform-origin:right;top:823.6px;font-size:24.71px;font-weight:400;color:#aeb3ba;font-family:'Liberation Sans', sans-serif;transform:scaleX(0.8850);">1.66s</span>
<svg class="a" style="left:2022px;top:814px;" width="44" height="44" viewBox="0 0 44 44" fill="none"><circle cx="22" cy="22" r="22" fill="#d0f4e1"/><circle cx="22" cy="22" r="11.3" stroke="#2f7f55" stroke-width="1.6"/><path d="M18.6 21.5 L21.1 24.4 L25.5 19.8" stroke="#2f7f55" stroke-width="2" stroke-linecap="round" stroke-linejoin="round"/></svg>
<svg class="a" style="left:959.7px;top:890px;" width="22" height="20" viewBox="0 0 22 20" fill="none"><path d="M0.6 5.5 L10 15.3 L19.3 5.5" stroke="#1f2329" stroke-width="2" stroke-linecap="round" stroke-linejoin="round"/></svg>
<span class="a t" style="left:996.7px;top:887.7px;font-size:26.89px;font-weight:400;color:#4a515b;font-family:'Liberation Sans', sans-serif;transform:scaleX(0.9557);">crewai.LLM.call</span>
<span class="a t" style="right:1526.0px;transform-origin:right;top:887.6px;font-size:24.71px;font-weight:400;color:#aeb3ba;font-family:'Liberation Sans', sans-serif;transform:scaleX(0.8850);">$0.0006</span>
<span class="a t" style="right:1443.0px;transform-origin:right;top:887.6px;font-size:24.71px;font-weight:400;color:#aeb3ba;font-family:'Liberation Sans', sans-serif;transform:scaleX(0.8850);">9.40s</span>
<svg class="a" style="left:2022px;top:878px;" width="44" height="44" viewBox="0 0 44 44" fill="none"><circle cx="22" cy="22" r="22" fill="#d0f4e1"/><circle cx="22" cy="22" r="11.3" stroke="#2f7f55" stroke-width="1.6"/><path d="M18.6 21.5 L21.1 24.4 L25.5 19.8" stroke="#2f7f55" stroke-width="2" stroke-linecap="round" stroke-linejoin="round"/></svg>
<svg class="a" style="left:987.7px;top:954px;" width="22" height="20" viewBox="0 0 22 20" fill="none"><path d="M0.6 5.5 L10 15.3 L19.3 5.5" stroke="#1f2329" stroke-width="2" stroke-linecap="round" stroke-linejoin="round"/></svg>
<span class="a t" style="left:1024.7px;top:951.7px;font-size:26.89px;font-weight:400;color:#4a515b;font-family:'Liberation Sans', sans-serif;transform:scaleX(1.0334);">litellm.completion</span>
<span class="a t" style="right:1526.0px;transform-origin:right;top:951.6px;font-size:24.71px;font-weight:400;color:#aeb3ba;font-family:'Liberation Sans', sans-serif;transform:scaleX(0.8850);">$0.0006</span>
<span class="a t" style="right:1443.0px;transform-origin:right;top:951.6px;font-size:24.71px;font-weight:400;color:#aeb3ba;font-family:'Liberation Sans', sans-serif;transform:scaleX(0.8850);">9.40s</span>
<svg class="a" style="left:2022px;top:942px;" width="44" height="44" viewBox="0 0 44 44" fill="none"><circle cx="22" cy="22" r="22" fill="#d0f4e1"/><circle cx="22" cy="22" r="11.3" stroke="#2f7f55" stroke-width="1.6"/><path d="M18.6 21.5 L21.1 24.4 L25.5 19.8" stroke="#2f7f55" stroke-width="2" stroke-linecap="round" stroke-linejoin="round"/></svg>
<span class="a t" style="left:1032.7px;top:1015.7px;font-size:26.89px;font-weight:400;color:#4a515b;font-family:'Liberation Sans', sans-serif;transform:scaleX(0.9906);">openai.chat.completions.create</span>
<span class="a t" style="right:1526.0px;transform-origin:right;top:1015.6px;font-size:24.71px;font-weight:400;color:#aeb3ba;font-family:'Liberation Sans', sans-serif;transform:scaleX(0.8850);">$0.0006</span>
<span class="a t" style="right:1443.0px;transform-origin:right;top:1015.6px;font-size:24.71px;font-weight:400;color:#aeb3ba;font-family:'Liberation Sans', sans-serif;transform:scaleX(0.8850);">9.40s</span>
<svg class="a" style="left:2022px;top:1006px;" width="44" height="44" viewBox="0 0 44 44" fill="none"><circle cx="22" cy="22" r="22" fill="#d0f4e1"/><circle cx="22" cy="22" r="11.3" stroke="#2f7f55" stroke-width="1.6"/><path d="M18.6 21.5 L21.1 24.4 L25.5 19.8" stroke="#2f7f55" stroke-width="2" stroke-linecap="round" stroke-linejoin="round"/></svg>
<svg class="a" style="left:903.7px;top:1082px;" width="22" height="20" viewBox="0 0 22 20" fill="none"><path d="M0.6 5.5 L10 15.3 L19.3 5.5" stroke="#1f2329" stroke-width="2" stroke-linecap="round" stroke-linejoin="round"/></svg>
<span class="a t" style="left:940.7px;top:1079.7px;font-size:26.89px;font-weight:400;color:#4a515b;font-family:'Liberation Sans', sans-serif;transform:scaleX(0.9481);">crewai.Task.execute_sync</span>
<span class="a t" style="right:1526.0px;transform-origin:right;top:1079.6px;font-size:24.71px;font-weight:400;color:#aeb3ba;font-family:'Liberation Sans', sans-serif;transform:scaleX(0.8850);">$0.0003</span>
<span class="a t" style="right:1443.0px;transform-origin:right;top:1079.6px;font-size:24.71px;font-weight:400;color:#aeb3ba;font-family:'Liberation Sans', sans-serif;transform:scaleX(0.8850);">5.87s</span>
<svg class="a" style="left:2022px;top:1070px;" width="44" height="44" viewBox="0 0 44 44" fill="none"><circle cx="22" cy="22" r="22" fill="#d0f4e1"/><circle cx="22" cy="22" r="11.3" stroke="#2f7f55" stroke-width="1.6"/><path d="M18.6 21.5 L21.1 24.4 L25.5 19.8" stroke="#2f7f55" stroke-width="2" stroke-linecap="round" stroke-linejoin="round"/></svg>
<svg class="a" style="left:931.7px;top:1146px;" width="22" height="20" viewBox="0 0 22 20" fill="none"><path d="M0.6 5.5 L10 15.3 L19.3 5.5" stroke="#1f2329" stroke-width="2" stroke-linecap="round" stroke-linejoin="round"/></svg>
<span class="a t" style="left:968.7px;top:1143.7px;font-size:26.89px;font-weight:400;color:#4a515b;font-family:'Liberation Sans', sans-serif;transform:scaleX(0.9706);">crewai.Agent.execute_task - 'Report Writer'</span>
<span class="a t" style="right:1526.0px;transform-origin:right;top:1143.6px;font-size:24.71px;font-weight:400;color:#aeb3ba;font-family:'Liberation Sans', sans-serif;transform:scaleX(0.8850);">$0.0003</span>
<span class="a t" style="right:1443.0px;transform-origin:right;top:1143.6px;font-size:24.71px;font-weight:400;color:#aeb3ba;font-family:'Liberation Sans', sans-serif;transform:scaleX(0.8850);">5.85s</span>
<svg class="a" style="left:2022px;top:1134px;" width="44" height="44" viewBox="0 0 44 44" fill="none"><circle cx="22" cy="22" r="22" fill="#d0f4e1"/><circle cx="22" cy="22" r="11.3" stroke="#2f7f55" stroke-width="1.6"/><path d="M18.6 21.5 L21.1 24.4 L25.5 19.8" stroke="#2f7f55" stroke-width="2" stroke-linecap="round" stroke-linejoin="round"/></svg>
<svg class="a" style="left:959.7px;top:1210px;" width="22" height="20" viewBox="0 0 22 20" fill="none"><path d="M0.6 5.5 L10 15.3 L19.3 5.5" stroke="#1f2329" stroke-width="2" stroke-linecap="round" stroke-linejoin="round"/></svg>
<span class="a t" style="left:996.7px;top:1207.7px;font-size:26.89px;font-weight:400;color:#4a515b;font-family:'Liberation Sans', sans-serif;transform:scaleX(0.9557);">crewai.LLM.call</span>
<span class="a t" style="right:1526.0px;transform-origin:right;top:1207.6px;font-size:24.71px;font-weight:400;color:#aeb3ba;font-family:'Liberation Sans', sans-serif;transform:scaleX(0.8850);">$0.0003</span>
<span class="a t" style="right:1443.0px;transform-origin:right;top:1207.6px;font-size:24.71px;font-weight:400;color:#aeb3ba;font-family:'Liberation Sans', sans-serif;transform:scaleX(0.8850);">5.85s</span>
<svg class="a" style="left:2022px;top:1198px;" width="44" height="44" viewBox="0 0 44 44" fill="none"><circle cx="22" cy="22" r="22" fill="#d0f4e1"/><circle cx="22" cy="22" r="11.3" stroke="#2f7f55" stroke-width="1.6"/><path d="M18.6 21.5 L21.1 24.4 L25.5 19.8" stroke="#2f7f55" stroke-width="2" stroke-linecap="round" stroke-linejoin="round"/></svg>
<svg class="a" style="left:987.7px;top:1274px;" width="22" height="20" viewBox="0 0 22 20" fill="none"><path d="M0.6 5.5 L10 15.3 L19.3 5.5" stroke="#1f2329" stroke-width="2" stroke-linecap="round" stroke-linejoin="round"/></svg>
<span class="a t" style="left:1024.7px;top:1271.7px;font-size:26.89px;font-weight:400;color:#4a515b;font-family:'Liberation Sans', sans-serif;transform:scaleX(1.0334);">litellm.completion</span>
<span class="a t" style="right:1526.0px;transform-origin:right;top:1271.6px;font-size:24.71px;font-weight:400;color:#aeb3ba;font-family:'Liberation Sans', sans-serif;transform:scaleX(0.8850);">$0.0003</span>
<span class="a t" style="right:1443.0px;transform-origin:right;top:1271.6px;font-size:24.71px;font-weight:400;color:#aeb3ba;font-family:'Liberation Sans', sans-serif;transform:scaleX(0.8850);">5.84s</span>
<svg class="a" style="left:2022px;top:1262px;" width="44" height="44" viewBox="0 0 44 44" fill="none"><circle cx="22" cy="22" r="22" fill="#d0f4e1"/><circle cx="22" cy="22" r="11.3" stroke="#2f7f55" stroke-width="1.6"/><path d="M18.6 21.5 L21.1 24.4 L25.5 19.8" stroke="#2f7f55" stroke-width="2" stroke-linecap="round" stroke-linejoin="round"/></svg>
<span class="a t" style="left:1032.7px;top:1335.7px;font-size:26.89px;font-weight:400;color:#4a515b;font-family:'Liberation Sans', sans-serif;transform:scaleX(0.9906);">openai.chat.completions.create</span>
<span class="a t" style="right:1526.0px;transform-origin:right;top:1335.6px;font-size:24.71px;font-weight:400;color:#aeb3ba;font-family:'Liberation Sans', sans-serif;transform:scaleX(0.8850);">$0.0003</span>
<span class="a t" style="right:1443.0px;transform-origin:right;top:1335.6px;font-size:24.71px;font-weight:400;color:#aeb3ba;font-family:'Liberation Sans', sans-serif;transform:scaleX(0.8850);">5.84s</span>
<svg class="a" style="left:2022px;top:1326px;" width="44" height="44" viewBox="0 0 44 44" fill="none"><circle cx="22" cy="22" r="22" fill="#d0f4e1"/><circle cx="22" cy="22" r="11.3" stroke="#2f7f55" stroke-width="1.6"/><path d="M18.6 21.5 L21.1 24.4 L25.5 19.8" stroke="#2f7f55" stroke-width="2" stroke-linecap="round" stroke-linejoin="round"/></svg>
<span class="a t" style="left:948.7px;top:1399.7px;font-size:26.89px;font-weight:400;color:#4a515b;font-family:'Liberation Sans', sans-serif;transform:scaleX(1.0026);">guardrail-validate_blog_content</span>
<span class="a t" style="right:1443.0px;transform-origin:right;top:1399.6px;font-size:24.71px;font-weight:400;color:#aeb3ba;font-family:'Liberation Sans', sans-serif;transform:scaleX(0.8850);">0ms</span>
<svg class="a" style="left:2022px;top:1390px;" width="44" height="44" viewBox="0 0 44 44" fill="none"><circle cx="22" cy="22" r="22" fill="#d0f4e1"/><circle cx="22" cy="22" r="11.3" stroke="#2f7f55" stroke-width="1.6"/><path d="M18.6 21.5 L21.1 24.4 L25.5 19.8" stroke="#2f7f55" stroke-width="2" stroke-linecap="round" stroke-linejoin="round"/></svg>
<div class="a" style="left:852px;top:1882px;width:1228px;height:2px;background:#dcdcdc;"></div>
<div class="a" style="left:852px;top:1884px;width:1228px;height:102px;background:#fff;"></div>
<span class="a t" style="left:884.8px;top:1918.4px;font-size:26.16px;font-weight:400;color:#79808a;font-family:'Liberation Sans', sans-serif;transform:scaleX(0.8991);">Timeline</span>
<svg class="a" style="left:1020px;top:1918px;" width="22" height="28" viewBox="0 0 22 28" fill="none"><path d="M15 4 L6 14 L15 24" stroke="#2b3038" stroke-width="2.4" stroke-linecap="round" stroke-linejoin="round"/></svg>
<div class="a" style="left:1076px;top:1923px;width:792px;height:17px;background:#e6e6e6;border-radius:9px;"></div>
<svg class="a" style="left:1075px;top:1919px;" width="26" height="26" viewBox="0 0 26 26" fill="none"><circle cx="12.6" cy="12.6" r="12.4" fill="#4fa6b7"/></svg>
<svg class="a" style="left:1899px;top:1918px;" width="22" height="28" viewBox="0 0 22 28" fill="none"><path d="M6 4 L15 14 L6 24" stroke="#2b3038" stroke-width="2.4" stroke-linecap="round" stroke-linejoin="round"/></svg>
<span class="a t" style="left:2005.0px;top:1918.4px;font-size:26.16px;font-weight:400;color:#79808a;font-family:'Liberation Sans', sans-serif;transform:scaleX(0.8307);">1/16</span>
<svg class="a" style="left:2019px;top:1857px;" width="50" height="50" viewBox="0 0 50 50" fill="none"><circle cx="25" cy="25" r="23" fill="#fff" stroke="#dcdcdc" stroke-width="1.6" style="filter:drop-shadow(0 1px 2px rgba(0,0,0,0.12))"/><path d="M18 28 L25 21 L32 28" stroke="#2b3038" stroke-width="2.2" stroke-linecap="round" stroke-linejoin="round"/></svg>
<div class="a" style="left:2080px;top:192px;width:2px;height:1794px;background:#dcdcdc;"></div>
<div class="a" style="left:3144px;top:117px;width:64px;height:64px;background:#dff3f6;border-radius:9px;"></div>
<svg class="a" style="left:3159.7px;top:135.5px;" width="37" height="34" viewBox="0 0 37 34" fill="none"><g transform="translate(2 2) scale(1.13)"><rect x="1.1" y="1.1" width="14.5" height="7.5" rx="3.1" stroke="#2f7e8f" stroke-width="2.0353982300884956"/><path d="M5.5 12.2 a3.3 3.3 0 0 0 3.3 3.3 H16.2 a3.3 3.3 0 0 0 3.3 -3.3 V10.8 a3.3 3.3 0 0 0 -1.9 -3.1" stroke="#2f7e8f" stroke-width="2.0353982300884956" stroke-linecap="round"/><path d="M10.5 18.3 a3.3 3.3 0 0 0 3.3 3.3 H20.7 a3.3 3.3 0 0 0 3.3 -3.3 V16.9 a3.3 3.3 0 0 0 -1.9 -3.1" stroke="#2f7e8f" stroke-width="2.0353982300884956" stroke-linecap="round"/></g></svg>
<svg class="a" style="left:3230px;top:130px;" width="36" height="38" viewBox="0 0 36 38" fill="none"><path d="M7 28 L6.8 22 L22.5 6.3 a2.6 2.6 0 0 1 3.7 0 L30 10 a2.6 2.6 0 0 1 0 3.7 L14.3 29.4 Z M6.8 22 L14.3 29.4 M17.8 17.5 L24 11.3" stroke="#535a63" stroke-width="2.3" stroke-linejoin="round" stroke-linecap="round"/><path d="M7.5 30.5 C4.5 31.5 2.8 34.6 5.5 34.8 H32" stroke="#535a63" stroke-width="2.3" stroke-linecap="round"/></svg>
<svg class="a" style="left:3304px;top:135px;" width="32" height="32" viewBox="0 0 32 32" fill="none"><path d="M4.5 10 V6.5 a3 3 0 0 1 3 -3 H11 M21 3.5 H24.5 a3 3 0 0 1 3 3 V10 M27.5 20 V23.5 a3 3 0 0 1 -3 3 H21 M11 26.5 H7.5 a3 3 0 0 1 -3 -3 V20" stroke="#535a63" stroke-width="2.3" stroke-linecap="round"/></svg>
<svg class="a" style="left:3378px;top:137px;" width="28" height="28" viewBox="0 0 28 28" fill="none"><path d="M3 3 L25 25 M25 3 L3 25" stroke="#535a63" stroke-width="2.4" stroke-linecap="round"/></svg>
<svg class="a" style="left:2122px;top:220px;" width="44" height="44" viewBox="0 0 44 44" fill="none"><circle cx="22" cy="22" r="21.7" fill="#d0f4e1"/><circle cx="22" cy="22" r="11.3" stroke="#2f7f55" stroke-width="1.6"/><path d="M18.6 21.5 L21.1 24.4 L25.5 19.8" stroke="#2f7f55" stroke-width="2" stroke-linecap="round" stroke-linejoin="round"/></svg>
<span class="a t" style="left:2199.0px;top:226.3px;font-size:32.7px;font-weight:400;color:#1b1e23;font-family:'Liberation Sans', sans-serif;transform:scaleX(0.9762);-webkit-text-stroke:0.85px #1b1e23;">crewai.Crew.kickoff</span>
<div class="a" style="left:2560px;top:222px;width:65px;height:40px;background:#efefef;border-radius:8px;"></div>
<span class="a t" style="left:2568.5px;top:232.2px;font-size:21.24px;font-weight:700;color:#2b3038;font-family:'Liberation Mono', monospace;transform:scaleX(0.9277);">9d89</span>
<svg class="a" style="left:3240px;top:226px;" width="34" height="32" viewBox="0 0 34 32" fill="none"><path d="M26.3 17.6 A11.3 11.3 0 1 1 17 5.5" stroke="#535a63" stroke-width="2.3" stroke-linecap="round"/><circle cx="10.6" cy="14.3" r="1.6" fill="#535a63"/><circle cx="19" cy="14.3" r="1.6" fill="#535a63"/><path d="M10.3 19.8 H19.7 C19 22.3 17.2 23.6 15 23.6 C12.8 23.6 11 22.3 10.3 19.8 Z" fill="#535a63"/><path d="M24.8 2 V11.8 M19.9 6.9 H29.7" stroke="#535a63" stroke-width="2.1" stroke-linecap="round"/></svg>
<svg class="a" style="left:3297px;top:225.6px;" width="32" height="32" viewBox="0 0 32 32" fill="none"><path d="M20.7 26.4 A12 12 0 1 1 26.3 19.1 L27.8 28.6 Z" stroke="#535a63" stroke-width="2.3" stroke-linejoin="round"/><circle cx="9.5" cy="16" r="1.4" fill="#535a63"/><circle cx="14.7" cy="16" r="1.4" fill="#535a63"/><circle cx="19.9" cy="16" r="1.4" fill="#535a63"/></svg>
<svg class="a" style="left:3374px;top:232px;" width="38" height="20" viewBox="0 0 38 20" fill="none"><circle cx="7.2" cy="9.8" r="3.4" stroke="#535a63" stroke-width="2.2"/><circle cx="18" cy="9.8" r="3.4" stroke="#535a63" stroke-width="2.2"/><circle cx="28.9" cy="9.8" r="3.4" stroke="#535a63" stroke-width="2.2"/></svg>
<span class="a t" style="left:2122.7px;top:307.9px;font-size:29.07px;font-weight:400;color:#2b3038;font-family:'Liberation Sans', sans-serif;transform:scaleX(0.8806);-webkit-text-stroke:0.76px #2b3038;">Call</span>
<span class="a t" style="left:2232.0px;top:307.9px;font-size:29.07px;font-weight:400;color:#79808a;font-family:'Liberation Sans', sans-serif;transform:scaleX(0.8721);-webkit-text-stroke:0.76px #79808a;">Code</span>
<span class="a t" style="left:2357.7px;top:307.9px;font-size:29.07px;font-weight:400;color:#79808a;font-family:'Liberation Sans', sans-serif;transform:scaleX(0.8916);-webkit-text-stroke:0.76px #79808a;">Feedback</span>
<span class="a t" style="left:2537.0px;top:307.9px;font-size:29.07px;font-weight:400;color:#79808a;font-family:'Liberation Sans', sans-serif;transform:scaleX(0.8712);-webkit-text-stroke:0.76px #79808a;">Scores</span>
<span class="a t" style="left:2680.6px;top:307.9px;font-size:29.07px;font-weight:400;color:#79808a;font-family:'Liberation Sans', sans-serif;transform:scaleX(0.9281);-webkit-text-stroke:0.76px #79808a;">Summary</span>
<span class="a t" style="left:2861.0px;top:307.9px;font-size:29.07px;font-weight:400;color:#79808a;font-family:'Liberation Sans', sans-serif;transform:scaleX(0.8513);-webkit-text-stroke:0.76px #79808a;">Use</span>
<div class="a" style="left:2122px;top:355px;width:1302px;height:2px;background:#dcdcdc;"></div>
<div class="a" style="left:2122px;top:352px;width:45px;height:4px;background:#4fa6b7;border-radius:1px;"></div>
<div class="a" style="left:3168px;top:406px;width:64px;height:64px;background:#dff3f6;border-radius:9px;"></div>
<svg class="a" style="left:3184px;top:422px;" width="32" height="32" viewBox="0 0 32 32" fill="none"><path d="M5.5 5.8 H26.5 M5.5 12.5 H26.5 M5.5 19.3 H26.5 M5.5 26 H26.5" stroke="#2f7e8f" stroke-width="2.4" stroke-linecap="round"/></svg>
<svg class="a" style="left:3248px;top:420px;" width="32" height="36" viewBox="0 0 32 36" fill="none"><path d="M16 14.5 V3 M9 9.5 L16 2.5 L23 9.5 M5.5 17.8 H26.5 M16 21.5 V33 M9 26.8 L16 33.5 L23 26.8" stroke="#535a63" stroke-width="2.3" stroke-linecap="round" stroke-linejoin="round"/></svg>
<svg class="a" style="left:3310px;top:424px;" width="36" height="28" viewBox="0 0 36 28" fill="none"><path d="M10.7 7.9 L4.3 13.8 L10.7 20.1 M25.6 7.9 L32 13.8 L25.6 20.1 M20.1 3 L15.7 25" stroke="#535a63" stroke-width="2.3" stroke-linecap="round" stroke-linejoin="round"/></svg>
<svg class="a" style="left:3374px;top:416px;" width="36" height="36" viewBox="0 0 36 36" fill="none"><ellipse cx="18" cy="21.8" rx="12.6" ry="9.8" stroke="#535a63" stroke-width="2.3"/><circle cx="18" cy="21.8" r="4.6" stroke="#535a63" stroke-width="2.3"/><path d="M29.6 9.3 L5.3 33.6" stroke="#535a63" stroke-width="2.3" stroke-linecap="round"/></svg>
<span class="a t" style="left:2122.7px;top:424.8px;font-size:29.51px;font-weight:400;color:#1b1e23;font-family:'Liberation Sans', sans-serif;transform:scaleX(1.0725);-webkit-text-stroke:0.77px #1b1e23;">Inputs</span>
<div class="a" style="left:2122px;top:479px;width:1302px;height:2px;background:#dcdcdc;"></div>
<div class="a" style="left:2122px;top:481px;width:1302px;height:74px;background:#fbfbfb;"></div>
<div class="a" style="left:2521px;top:495px;width:2px;height:45px;background:#dcdcdc;"></div>
<div class="a" style="left:3422px;top:495px;width:2px;height:45px;background:#dcdcdc;"></div>
<span class="a t" style="left:2143.0px;top:503.0px;font-size:28.34px;font-weight:400;color:#8d939c;font-family:'Liberation Sans', sans-serif;transform:scaleX(0.8905);">Path</span>
<span class="a t" style="left:2542.0px;top:503.0px;font-size:28.34px;font-weight:400;color:#8d939c;font-family:'Liberation Sans', sans-serif;transform:scaleX(0.9096);">Value</span>
<div class="a" style="left:2122px;top:554px;width:1302px;height:2px;background:#dcdcdc;"></div>
<svg class="a" style="left:2150px;top:584px;" width="24" height="26" viewBox="0 0 24 26" fill="none"><path d="M7 3 L16 12.5 L7 22" stroke="#535a63" stroke-width="2.4" stroke-linecap="round" stroke-linejoin="round"/></svg>
<span class="a t" style="left:2202.6px;top:580.5px;font-size:28.34px;font-weight:400;color:#1b1e23;font-family:'Liberation Sans', sans-serif;transform:scaleX(0.9389);">self</span>
<div class="a" style="left:2122px;top:632px;width:1302px;height:2px;background:#dcdcdc;"></div>
<svg class="a" style="left:2150px;top:660px;" width="24" height="26" viewBox="0 0 24 26" fill="none"><path d="M7 3 L16 12.5 L7 22" stroke="#535a63" stroke-width="2.4" stroke-linecap="round" stroke-linejoin="round"/></svg>
<span class="a t" style="left:2202.6px;top:656.5px;font-size:28.34px;font-weight:400;color:#1b1e23;font-family:'Liberation Sans', sans-serif;transform:scaleX(0.9816);">inputs</span>
<div class="a" style="left:3168px;top:775px;width:64px;height:64px;background:#dff3f6;border-radius:9px;"></div>
<svg class="a" style="left:3184px;top:791px;" width="32" height="32" viewBox="0 0 32 32" fill="none"><path d="M5.5 5.8 H26.5 M5.5 12.5 H26.5 M5.5 19.3 H26.5 M5.5 26 H26.5" stroke="#2f7e8f" stroke-width="2.4" stroke-linecap="round"/></svg>
<svg class="a" style="left:3248px;top:789px;" width="32" height="36" viewBox="0 0 32 36" fill="none"><path d="M16 14.5 V3 M9 9.5 L16 2.5 L23 9.5 M5.5 17.8 H26.5 M16 21.5 V33 M9 26.8 L16 33.5 L23 26.8" stroke="#535a63" stroke-width="2.3" stroke-linecap="round" stroke-linejoin="round"/></svg>
<svg class="a" style="left:3310px;top:793px;" width="36" height="28" viewBox="0 0 36 28" fill="none"><path d="M10.7 7.9 L4.3 13.8 L10.7 20.1 M25.6 7.9 L32 13.8 L25.6 20.1 M20.1 3 L15.7 25" stroke="#535a63" stroke-width="2.3" stroke-linecap="round" stroke-linejoin="round"/></svg>
<svg class="a" style="left:3374px;top:785px;" width="36" height="36" viewBox="0 0 36 36" fill="none"><ellipse cx="18" cy="21.8" rx="12.6" ry="9.8" stroke="#535a63" stroke-width="2.3"/><circle cx="18" cy="21.8" r="4.6" stroke="#535a63" stroke-width="2.3"/><path d="M29.6 9.3 L5.3 33.6" stroke="#535a63" stroke-width="2.3" stroke-linecap="round"/></svg>
<span class="a t" style="left:2122.7px;top:793.6px;font-size:29.51px;font-weight:400;color:#1b1e23;font-family:'Liberation Sans', sans-serif;transform:scaleX(1.0964);-webkit-text-stroke:0.77px #1b1e23;">Output</span>
<div class="a" style="left:2122px;top:847px;width:1302px;height:2px;background:#dcdcdc;"></div>
<div class="a" style="left:2122px;top:849px;width:1302px;height:74px;background:#fbfbfb;"></div>
<div class="a" style="left:2521px;top:863px;width:2px;height:45px;background:#dcdcdc;"></div>
<div class="a" style="left:3422px;top:863px;width:2px;height:45px;background:#dcdcdc;"></div>
<span class="a t" style="left:2143.0px;top:871.0px;font-size:28.34px;font-weight:400;color:#8d939c;font-family:'Liberation Sans', sans-serif;transform:scaleX(0.8905);">Path</span>
<span class="a t" style="left:2542.0px;top:871.0px;font-size:28.34px;font-weight:400;color:#8d939c;font-family:'Liberation Sans', sans-serif;transform:scaleX(0.9096);">Value</span>
<div class="a" style="left:2122px;top:922px;width:1302px;height:2px;background:#dcdcdc;"></div>
<span class="a t" style="left:2202.4px;top:950.5px;font-size:28.34px;font-weight:400;color:#1b1e23;font-family:'Liberation Sans', sans-serif;transform:scaleX(0.9331);">raw</span>
<div class="a" style="left:2122px;top:1002px;width:1302px;height:2px;background:#dcdcdc;"></div>
<span class="a t" style="left:2202.4px;top:1026.5px;font-size:28.34px;font-weight:400;color:#1b1e23;font-family:'Liberation Sans', sans-serif;transform:scaleX(0.9809);">pydantic</span>
<div class="a" style="left:2122px;top:1078px;width:1302px;height:2px;background:#dcdcdc;"></div>
<span class="a t" style="left:2202.4px;top:1102.5px;font-size:28.34px;font-weight:400;color:#1b1e23;font-family:'Liberation Sans', sans-serif;transform:scaleX(0.9784);">json_dict</span>
<div class="a" style="left:2122px;top:1154px;width:1302px;height:2px;background:#dcdcdc;"></div>
<svg class="a" style="left:2150px;top:1180px;" width="24" height="26" viewBox="0 0 24 26" fill="none"><path d="M7 3 L16 12.5 L7 22" stroke="#535a63" stroke-width="2.4" stroke-linecap="round" stroke-linejoin="round"/></svg>
<span class="a t" style="left:2202.4px;top:1178.5px;font-size:28.34px;font-weight:400;color:#1b1e23;font-family:'Liberation Sans', sans-serif;transform:scaleX(0.9773);">tasks_output</span>
<div class="a" style="left:2122px;top:1230px;width:1302px;height:2px;background:#dcdcdc;"></div>
<svg class="a" style="left:2150px;top:1256px;" width="24" height="26" viewBox="0 0 24 26" fill="none"><path d="M7 3 L16 12.5 L7 22" stroke="#535a63" stroke-width="2.4" stroke-linecap="round" stroke-linejoin="round"/></svg>
<span class="a t" style="left:2202.4px;top:1254.5px;font-size:28.34px;font-weight:400;color:#1b1e23;font-family:'Liberation Sans', sans-serif;transform:scaleX(0.9350);">token_usage</span>
<span class="a t" style="left:2523.2px;top:950.4px;font-size:28.34px;font-weight:400;color:#1b1e23;font-family:'Liberation Sans', sans-serif;transform:scaleX(0.9453);">**Investment Report: AI in Chemical and Materials Science Market** - **M...</span>
<div class="a" style="left:2522px;top:1021.5px;width:65px;height:39px;background:#efefef;border-radius:8px;"></div>
<span class="a t" style="left:2531.0px;top:1031.8px;font-size:20.49px;font-weight:700;color:#1b1e23;font-family:'Liberation Mono', monospace;transform:scaleX(0.9558);">null</span>
<div class="a" style="left:2522px;top:1097.5px;width:65px;height:39px;background:#efefef;border-radius:8px;"></div>
<span class="a t" style="left:2531.0px;top:1107.8px;font-size:20.49px;font-weight:700;color:#1b1e23;font-family:'Liberation Mono', monospace;transform:scaleX(0.9558);">null</span>
<span class="a t" style="left:2122.9px;top:1408.8px;font-size:29.8px;font-weight:400;color:#1b1e23;font-family:'Liberation Sans', sans-serif;transform:scaleX(1.0155);-webkit-text-stroke:0.77px #1b1e23;">Child calls of crewai.Task.execute_sync:v0</span>
<div class="a" style="left:3225px;top:1398px;width:199px;height:48px;background:#f2f2f2;border-radius:9px;"></div>
<svg class="a" style="left:3238px;top:1405px;" width="32" height="34" viewBox="0 0 32 34" fill="none"><path d="M16 22.7 V4.2 M9.8 10.3 L16 4 L22.2 10.3 M10.5 16.2 H8.5 a3 3 0 0 0 -3 3 v6.5 a3 3 0 0 0 3 3 h15 a3 3 0 0 0 3 -3 v-6.5 a3 3 0 0 0 -3 -3 h-2" stroke="#2b3038" stroke-width="2.2" stroke-linecap="round" stroke-linejoin="round"/></svg>
<span class="a t" style="left:3281.6px;top:1408.0px;font-size:28.34px;font-weight:400;color:#2b3038;font-family:'Liberation Sans', sans-serif;transform:scaleX(0.9373);-webkit-text-stroke:0.74px #2b3038;">Go to table</span>
<div class="a" style="left:2122px;top:1472px;width:1302px;height:2px;background:#dcdcdc;"></div>
<div class="a" style="left:2122px;top:1474px;width:1302px;height:318px;background:#fbfbfb;"></div>
<div class="a" style="left:2188px;top:1474px;width:2px;height:512px;background:#dcdcdc;"></div>
<span class="a t" style="left:2210.0px;top:1498.7px;font-size:28.34px;font-weight:400;color:#8d939c;font-family:'Liberation Sans', sans-serif;transform:scaleX(0.9895);">inputs</span>
<div class="a" style="left:2210px;top:1552px;width:1214px;height:2px;background:#dcdcdc;"></div>
<span class="a t" style="left:2210.0px;top:1578.7px;font-size:28.34px;font-weight:400;color:#8d939c;font-family:'Liberation Sans', sans-serif;transform:scaleX(0.9451);">agent</span>
<div class="a" style="left:2210px;top:1632px;width:1214px;height:2px;background:#dcdcdc;"></div>
<div class="a" style="left:2141px;top:1738px;width:28px;height:28px;background:transparent;box-shadow:inset 0 0 0 2.6px #6c727b;border-radius:7px;"></div>
<div class="a" style="left:2489px;top:1731px;width:2px;height:47px;background:#dcdcdc;"></div>
<div class="a" style="left:2789px;top:1731px;width:2px;height:47px;background:#dcdcdc;"></div>
<div class="a" style="left:3089px;top:1731px;width:2px;height:47px;background:#dcdcdc;"></div>
<div class="a" style="left:3389px;top:1731px;width:2px;height:47px;background:#dcdcdc;"></div>
<div class="a" style="left:2500px;top:1700px;width:277px;height:90px;overflow:hidden">
<span class="a t" style="left:10.7px;top:38.0px;font-size:28.34px;font-weight:400;color:#8d939c;font-family:'Liberation Sans', sans-serif;transform:scaleX(0.9490);">agent_ops_agent_name</span>
</div>
<span class="a t" style="left:2210.0px;top:1738.0px;font-size:28.34px;font-weight:400;color:#8d939c;font-family:'Liberation Sans', sans-serif;transform:scaleX(0.9473);">agent_executor</span>
<span class="a t" style="left:2810.0px;top:1738.0px;font-size:28.34px;font-weight:400;color:#8d939c;font-family:'Liberation Sans', sans-serif;transform:scaleX(0.9578);">allow_code_execution</span>
<span class="a t" style="left:3111.0px;top:1738.0px;font-size:28.34px;font-weight:400;color:#8d939c;font-family:'Liberation Sans', sans-serif;transform:scaleX(0.9699);">allow_delegation</span>
<div class="a" style="left:3400px;top:1700px;width:24px;height:90px;overflow:hidden">
<span class="a t" style="left:10.6px;top:38.0px;font-size:28.34px;font-weight:400;color:#8d939c;font-family:'Liberation Sans', sans-serif;">backstory</span>
</div>
<div class="a" style="left:2122px;top:1792px;width:1302px;height:2px;background:#dcdcdc;"></div>
<div class="a" style="left:2141px;top:1819px;width:28px;height:28px;background:transparent;box-shadow:inset 0 0 0 2.6px #6c727b;border-radius:7px;"></div>
<span class="a t" style="left:2210.0px;top:1818.0px;font-size:28.34px;font-weight:400;color:#1b1e23;font-family:'Liberation Sans', sans-serif;transform:scaleX(0.9352);">&lt;crewai.agents.cre…</span>
<span class="a t" style="left:2510.7px;top:1818.0px;font-size:28.34px;font-weight:400;color:#1b1e23;font-family:'Liberation Sans', sans-serif;transform:scaleX(0.9618);">'Report Writer'</span>
<span class="a t" style="left:2810.0px;top:1818.0px;font-size:28.34px;font-weight:400;color:#1b1e23;font-family:'Liberation Sans', sans-serif;transform:scaleX(0.8704);">False</span>
<span class="a t" style="left:3111.0px;top:1818.0px;font-size:28.34px;font-weight:400;color:#1b1e23;font-family:'Liberation Sans', sans-serif;transform:scaleX(0.8704);">False</span>
<div class="a" style="left:3400px;top:1794px;width:24px;height:76px;overflow:hidden">
<span class="a t" style="left:10.6px;top:24.0px;font-size:28.34px;font-weight:400;color:#1b1e23;font-family:'Liberation Sans', sans-serif;">'E</span>
</div>
<div class="a" style="left:2122px;top:1870px;width:1302px;height:2px;background:#dcdcdc;"></div>
<div class="a" style="left:2141px;top:1896px;width:28px;height:28px;background:transparent;box-shadow:inset 0 0 0 2.6px #6c727b;border-radius:7px;"></div>
<span class="a t" style="left:2210.0px;top:1895.0px;font-size:28.34px;font-weight:400;color:#1b1e23;font-family:'Liberation Sans', sans-serif;transform:scaleX(0.9352);">&lt;crewai.agents.cre…</span>
<span class="a t" style="left:2510.7px;top:1895.0px;font-size:28.34px;font-weight:400;color:#1b1e23;font-family:'Liberation Sans', sans-serif;transform:scaleX(0.9266);">'Research Analyst'</span>
<span class="a t" style="left:2810.0px;top:1895.0px;font-size:28.34px;font-weight:400;color:#1b1e23;font-family:'Liberation Sans', sans-serif;transform:scaleX(0.8704);">False</span>
<span class="a t" style="left:3111.0px;top:1895.0px;font-size:28.34px;font-weight:400;color:#1b1e23;font-family:'Liberation Sans', sans-serif;transform:scaleX(0.8704);">False</span>
<div class="a" style="left:3400px;top:1871px;width:24px;height:76px;overflow:hidden">
<span class="a t" style="left:10.6px;top:24.0px;font-size:28.34px;font-weight:400;color:#1b1e23;font-family:'Liberation Sans', sans-serif;">'E</span>
</div>
<div class="a" style="left:2122px;top:1947px;width:1302px;height:2px;background:#dcdcdc;"></div>
<div class="a" style="left:40px;top:1850px;width:96px;height:96px;border-radius:50%;background:#4ea7b8;box-shadow:0 3px 22px rgba(0,0,0,0.16)"></div>
<svg class="a" style="left:66px;top:1873px;" width="46" height="52" viewBox="0 0 46 52" fill="none"><path d="M7 0.8 H37 a6 6 0 0 1 6 6 V48.8 L30 43.9 H7 a6 6 0 0 1 -6 -6 V6.8 a6 6 0 0 1 6 -6z" fill="#fff"/><path d="M7.6 31 Q22 40.5 36.5 31" stroke="#4ea7b8" stroke-width="2.8" stroke-linecap="round"/></svg>
</body></html>
